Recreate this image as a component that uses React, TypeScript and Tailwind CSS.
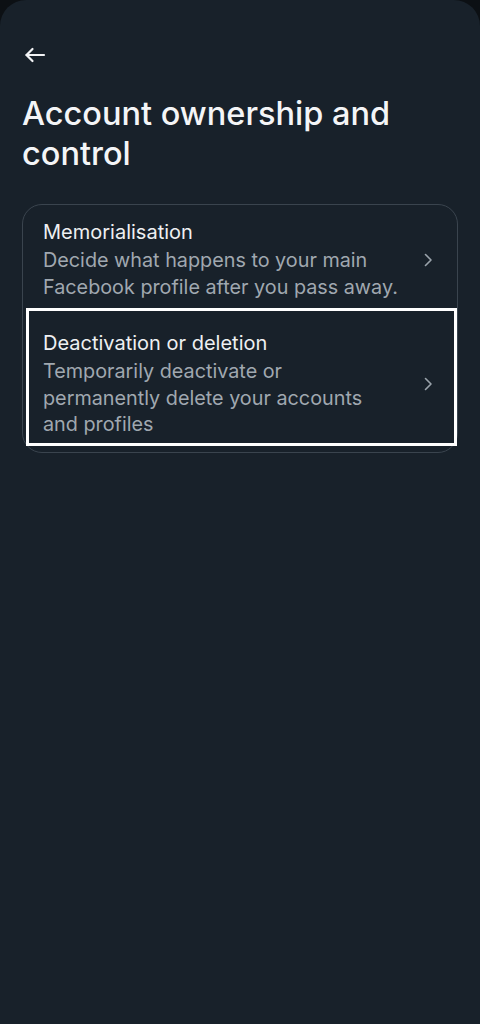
import React from 'react';

type SettingRow = {
  title: string;
  description: string;
  selected?: boolean;
};

const rows: SettingRow[] = [
  {
    title: 'Memorialisation',
    description: 'Decide what happens to your main Facebook profile after you pass away.',
  },
  {
    title: 'Deactivation or deletion',
    description: 'Temporarily deactivate or permanently delete your accounts and profiles',
    selected: true,
  },
];

const font = { fontFamily: 'Inter, "Noto Sans", sans-serif' };

const BackArrow = () => (
  <svg width="22" height="16" viewBox="0 0 22 16" fill="none" stroke="#f2f3f5" strokeWidth="2.2" strokeLinecap="round" strokeLinejoin="round">
    <path d="M20 8H2.5" />
    <path d="M8.5 2L2.5 8l6 6" />
  </svg>
);

const Chevron = () => (
  <svg width="10" height="14" viewBox="0 0 10 14" fill="none" stroke="#9aa3ab" strokeWidth="1.6" strokeLinecap="round" strokeLinejoin="round">
    <path d="M2.5 1.5L8 7l-5.5 5.5" />
  </svg>
);

const Row: React.FC<{ row: SettingRow }> = ({ row }) => (
  <div className="relative flex items-center pl-[20px] pr-[24px]">
    <div className="w-[359px]">
      <div className="text-[20px] leading-[24px] text-[#eef0f2]">{row.title}</div>
      <div className="mt-[3px] text-[19.8px] leading-[26.5px] text-[#a0a8b0]">{row.description}</div>
    </div>
    <div className="ml-auto flex">
      <Chevron />
    </div>
    {row.selected && (
      <div className="pointer-events-none absolute left-[3px] right-0 top-[-23px] bottom-[-8px] border-[3.5px] border-white" />
    )}
  </div>
);

export default function App() {
  return (
    <div className="h-[1024px] w-full bg-[#0c1014]" style={font}>
      <div className="h-full rounded-t-[26px] bg-[#18212a] px-[22px]">
        <div className="pt-[47px] pl-[2px] flex h-[63px]">
          <BackArrow />
        </div>
        <h1 className="mt-[31px] text-[32.5px] leading-[40px] font-medium text-[#f4f5f7]">
          Account ownership and control
        </h1>
        <div className="mt-[30px] rounded-[20px] border border-[#3a444e] pt-[15px] pb-[14px] flex flex-col gap-[31px]">
          {rows.map((r) => (
            <Row key={r.title} row={r} />
          ))}
        </div>
      </div>
    </div>
  );
}
